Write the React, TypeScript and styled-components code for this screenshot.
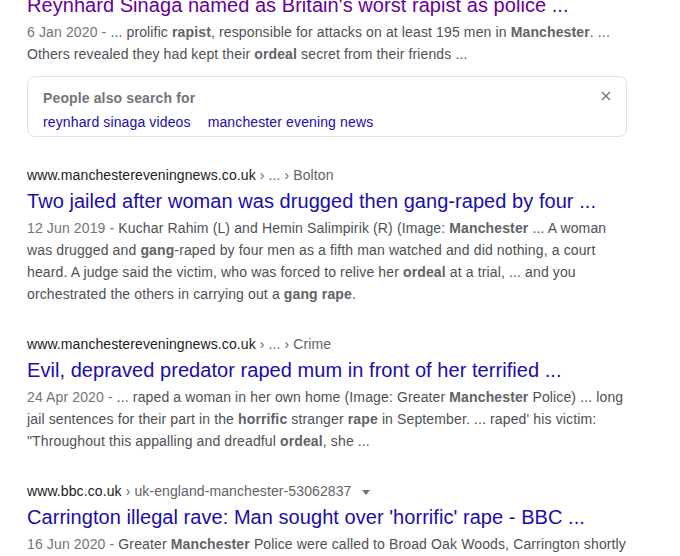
import React from "react";
import styled, { createGlobalStyle } from "styled-components";

const GlobalStyle = createGlobalStyle`
  html, body {
    margin: 0;
    padding: 0;
    background: #fff;
    font-family: "Liberation Sans", Arial, sans-serif;
  }
`;

const Page = styled.div`
  width: 680px;
  height: 556px;
  overflow: hidden;
`;

const Results = styled.div`
  width: 600px;
  margin-left: 27px;
  margin-top: -8px;
  display: flex;
  flex-direction: column;
`;

const Result = styled.div`
  display: flex;
  flex-direction: column;
  margin-bottom: 30px;
`;

const Crumb = styled.div`
  font-size: 14px;
  line-height: 18px;
  letter-spacing: 0.1px;
  color: #202124;
  display: flex;
  align-items: center;
  white-space: nowrap;
`;

const CrumbTail = styled.span`
  color: #5f6368;
`;

const Caret = styled.span`
  display: inline-block;
  width: 0;
  height: 0;
  margin-left: 11px;
  margin-top: 2px;
  border-left: 4px solid transparent;
  border-right: 4px solid transparent;
  border-top: 5px solid #70757a;
`;

const Title = styled.a<{ $visited?: boolean }>`
  display: block;
  font-size: 20px;
  line-height: 26px;
  letter-spacing: 0.05px;
  margin-top: 4px;
  margin-bottom: 3px;
  color: ${(p) => (p.$visited ? "#660099" : "#1a0dab")};
  text-decoration: none;
  white-space: nowrap;
`;

const Snippet = styled.div`
  font-size: 14px;
  line-height: 22px;
  letter-spacing: 0.13px;
  color: #4d5156;
  white-space: nowrap;
  b {
    color: #5f6368;
    font-weight: bold;
  }
`;

const Date = styled.span`
  color: #70757a;
`;

const AlsoBox = styled.div`
  position: relative;
  border: 1px solid #dfe1e5;
  border-radius: 8px;
  padding: 11px 15px 2px 15px;
  margin-top: 11px;
  margin-bottom: 29px;
`;

const AlsoHeading = styled.div`
  font-size: 14px;
  line-height: 20px;
  letter-spacing: 0.13px;
  font-weight: bold;
  color: #70757a;
  margin-bottom: 2px;
`;

const AlsoLinks = styled.div`
  display: flex;
  gap: 17px;
  font-size: 14px;
  line-height: 24px;
  letter-spacing: 0.13px;
`;

const AlsoLink = styled.a`
  color: #1a0dab;
  text-decoration: none;
`;

const Close = styled.svg`
  position: absolute;
  top: 14px;
  right: 15px;
`;

export default function App() {
  return (
    <Page>
      <GlobalStyle />
      <Results>
        <Result style={{ marginBottom: 0 }}>
          <Title $visited style={{ marginTop: 0 }}>
            Reynhard Sinaga named as Britain's worst rapist as police ...
          </Title>
          <Snippet>
            <Date>6 Jan 2020 - </Date>... prolific <b>rapist</b>, responsible for attacks on at least 195 men in{" "}
            <b>Manchester</b>. ...
            <br />
            Others revealed they had kept their <b>ordeal</b> secret from their friends ...
          </Snippet>
        </Result>

        <AlsoBox>
          <AlsoHeading>People also search for</AlsoHeading>
          <AlsoLinks>
            <AlsoLink>reynhard sinaga videos</AlsoLink>
            <AlsoLink>manchester evening news</AlsoLink>
          </AlsoLinks>
          <Close width="10" height="10" viewBox="0 0 10 10">
            <path d="M1 1L9 9M9 1L1 9" stroke="#70757a" strokeWidth="1.4" />
          </Close>
        </AlsoBox>

        <Result>
          <Crumb>
            www.manchestereveningnews.co.uk<CrumbTail>&nbsp;› ... › Bolton</CrumbTail>
          </Crumb>
          <Title>Two jailed after woman was drugged then gang-raped by four ...</Title>
          <Snippet>
            <Date>12 Jun 2019 - </Date>Kuchar Rahim (L) and Hemin Salimpirik (R) (Image: <b>Manchester</b> ... A woman
            <br />
            was drugged and <b>gang</b>-raped by four men as a fifth man watched and did nothing, a court
            <br />
            heard. A judge said the victim, who was forced to relive her <b>ordeal</b> at a trial, ... and you
            <br />
            orchestrated the others in carrying out a <b>gang rape</b>.
          </Snippet>
        </Result>

        <Result>
          <Crumb>
            www.manchestereveningnews.co.uk<CrumbTail>&nbsp;› ... › Crime</CrumbTail>
          </Crumb>
          <Title>Evil, depraved predator raped mum in front of her terrified ...</Title>
          <Snippet>
            <Date>24 Apr 2020 - </Date>... raped a woman in her own home (Image: Greater <b>Manchester</b> Police) ... long
            <br />
            jail sentences for their part in the <b>horrific</b> stranger <b>rape</b> in September. ... raped' his victim:
            <br />
            "Throughout this appalling and dreadful <b>ordeal</b>, she ...
          </Snippet>
        </Result>

        <Result>
          <Crumb>
            www.bbc.co.uk<CrumbTail>&nbsp;› uk-england-manchester-53062837</CrumbTail>
            <Caret />
          </Crumb>
          <Title>Carrington illegal rave: Man sought over 'horrific' rape - BBC ...</Title>
          <Snippet>
            <Date>16 Jun 2020 - </Date>Greater <b>Manchester</b> Police were called to Broad Oak Woods, Carrington shortly
          </Snippet>
        </Result>
      </Results>
    </Page>
  );
}
